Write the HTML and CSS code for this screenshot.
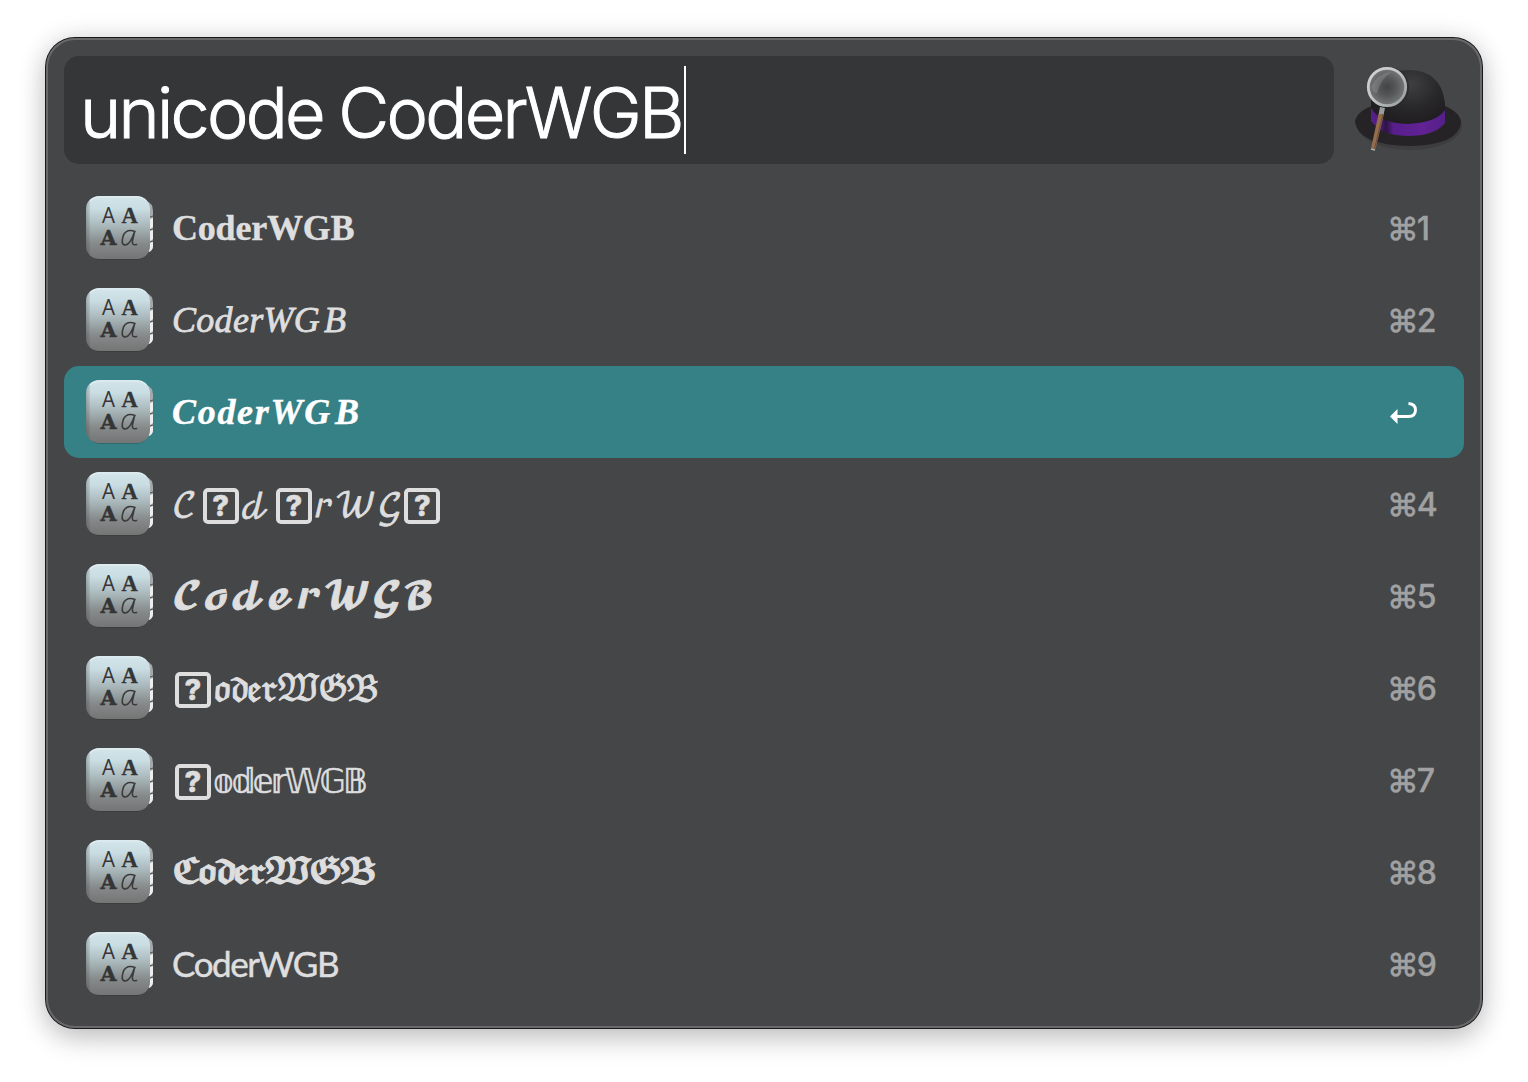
FILE: index.html
```html
<!DOCTYPE html>
<html lang="en">
<head>
<meta charset="utf-8">
<title>unicode CoderWGB</title>
<link rel="stylesheet" href="styles.css">
</head>
<body>
<svg class="defs" width="0" height="0" aria-hidden="true">
  <defs>
    <linearGradient id="tile" x1="0" y1="0" x2="0" y2="1">
      <stop offset="0" stop-color="#d3e5ea"/><stop offset=".2" stop-color="#c9dde3"/><stop offset=".48" stop-color="#a9b7ba"/><stop offset=".75" stop-color="#868a8a"/><stop offset="1" stop-color="#747575"/>
    </linearGradient>
    <linearGradient id="edge" x1="0" y1="0" x2="1" y2="0">
      <stop offset="0" stop-color="#333" stop-opacity=".3"/><stop offset=".06" stop-color="#444" stop-opacity=".12"/><stop offset=".07" stop-color="#444" stop-opacity="0"/>
    </linearGradient>
    <symbol id="font-book" viewBox="0 0 72 72">
      <rect x="5" y="6" width="62" height="62" rx="13" fill="#222" opacity=".25"/>
      <path d="M64 9q7 2 7 10v35q0 5-5 6z" fill="#a4a9ab"/>
      <path d="M68 27l3-1v9l-3 2zM68 39l3-1v9l-3 2zM67 51l4-1v4q0 4-4 6z" fill="#eee"/>
      <path d="M68 25l3-1M68 38l3-1M68 50l3-1" stroke="#555" stroke-width="1"/>
      <rect x="4" y="4" width="64" height="63" rx="13" fill="url(#tile)"/>
      <rect x="4" y="4" width="64" height="63" rx="13" fill="url(#edge)"/>
      <path d="M8 9q4-4 9-4h38q6 0 9 4" fill="none" stroke="#e8f3f6" stroke-width="1.2" opacity=".8"/>
      <g fill="#353536" text-anchor="middle">
        <text x="26.5" y="31" font-family="Open Sans" font-size="21" font-weight="400" textLength="13" lengthAdjust="spacingAndGlyphs">A</text>
        <text x="47.500" y="31" font-family="Liberation Serif" font-size="22.5" font-weight="700" stroke="#353536" stroke-width=".3">A</text>
        <text x="26.5" y="53" font-family="DejaVu Serif" font-size="20.500" font-weight="700" stroke="#353536" stroke-width=".5" textLength="16" lengthAdjust="spacingAndGlyphs">A</text>
      </g>
      <path d="M53 39.500Q45 36.500 41.500 43Q38 53 43.500 53Q48 53 52.500 40L50.500 48.500Q49.500 54 54.500 52.500" fill="none" stroke="#3b3b3c" stroke-width="1.6" stroke-linecap="round" stroke-linejoin="round"/>
    </symbol>
  </defs>
</svg>
<main class="panel">
  <header class="search">
    <div class="field"><span class="query">unicode CoderWGB</span><i class="caret"></i></div>
    <svg class="hat" viewBox="0 0 110 92">
      <defs>
        <radialGradient id="dome" cx=".55" cy=".22" r=".6"><stop offset="0" stop-color="#3f3e40"/><stop offset=".6" stop-color="#28272a"/><stop offset="1" stop-color="#201e21"/></radialGradient>
        <linearGradient id="band"><stop offset="0" stop-color="#57208b"/><stop offset=".12" stop-color="#4e1d7c"/><stop offset=".2" stop-color="#2c1541"/><stop offset=".3" stop-color="#571e8c"/><stop offset=".7" stop-color="#622293"/><stop offset="1" stop-color="#54208a"/></linearGradient>
        <radialGradient id="lens"><stop offset="0" stop-color="#424445"/><stop offset=".5" stop-color="#565859"/><stop offset="1" stop-color="#777a7a"/></radialGradient>
        <linearGradient id="ring" x1="0" y1="0" x2="1" y2="1"><stop offset="0" stop-color="#d4d6d6"/><stop offset=".5" stop-color="#c0c3c3"/><stop offset="1" stop-color="#959898"/></linearGradient>
      </defs>
      <ellipse cx="56" cy="61" rx="52" ry="24" fill="#333" opacity=".45"/>
      <path d="M1 57Q2 47 18 41L91 41Q107 48 107 58Q104 80 56 81Q4 80 1 57Z" fill="#252326"/>
      <path d="M17 59V34Q22 6 54 5Q87 5 91 38V57Q76 71 52 70Q26 68 17 59Z" fill="url(#dome)"/>
      <path d="M17 43Q26 58 53 59Q82 58 91 45V58Q81 71 53 71Q26 70 17 56Z" fill="url(#band)"/>
      <circle cx="35" cy="22" r="20" fill="#252525" opacity=".5"/>
      <circle cx="33" cy="22" r="18.700" fill="url(#lens)" stroke="url(#ring)" stroke-width="2.800"/>
      <path d="M18 21Q23 9 37 7Q27 14 23 28Q18 28 18 21Z" fill="#a7abab" opacity=".3"/>
      <path d="M26 42L31 43L29.500 50H24.500Z" fill="#999d9d"/>
      <path d="M24.500 49H30L21.500 84L17 83.500Z" fill="#956d4d"/>
      <path d="M29 49L20.500 84" stroke="#684d3a" stroke-width="1"/>
      <path d="M17 84L21 85" stroke="#b7b0a6" stroke-width="1.500"/>
    </svg>
  </header>
  <ul class="results">
    <li class="row"><svg class="icon"><use href="#font-book"/></svg><span class="label bold">CoderWGB</span><span class="key">⌘1</span></li>
    <li class="row"><svg class="icon"><use href="#font-book"/></svg><span class="label italic">CoderWG<span class="b">B</span></span><span class="key">⌘2</span></li>
    <li class="row selected"><svg class="icon"><use href="#font-book"/></svg><span class="label bold-italic">CoderWG<span class="b">B</span></span>
      <span class="key"><svg class="return" viewBox="0 0 28 24"><path d="M7 15.500H18.500Q25.500 15.500 25.500 9Q25.500 3 18.500 2.500" fill="none" stroke="#fff" stroke-width="2.900"/><path d="M0 15.500L7.500 8V23Z" fill="#fff"/></svg></span></li>
    <li class="row"><svg class="icon"><use href="#font-book"/></svg><span class="label math script">𝒞<b class="missing">?</b>𝒹<b class="missing">?</b>𝓇𝒲𝒢<b class="missing last">?</b></span><span class="key">⌘4</span></li>
    <li class="row"><svg class="icon"><use href="#font-book"/></svg><span class="label math bold-script">𝓒𝓸𝓭𝓮𝓻𝓦𝓖𝓑</span><span class="key">⌘5</span></li>
    <li class="row"><svg class="icon"><use href="#font-book"/></svg><span class="label math fraktur"><b class="missing">?</b>𝔬𝔡𝔢𝔯𝔚𝔊𝔅</span><span class="key">⌘6</span></li>
    <li class="row"><svg class="icon"><use href="#font-book"/></svg><span class="label math double"><b class="missing">?</b>𝕠𝕕𝕖𝕣𝕎𝔾𝔹</span><span class="key">⌘7</span></li>
    <li class="row"><svg class="icon"><use href="#font-book"/></svg><span class="label math bold-fraktur">𝕮𝖔𝖉𝖊𝖗𝖂𝕲𝕭</span><span class="key">⌘8</span></li>
    <li class="row"><svg class="icon"><use href="#font-book"/></svg><span class="label sans">CoderWGB</span><span class="key">⌘9</span></li>
  </ul>
</main>
</body>
</html>
```
FILE: styles.css
```css
* { box-sizing: border-box; }
body { margin: 0; height: 1082px; padding: 38px 46px; background: #fff; overflow: hidden; }
.defs { position: absolute; }
.panel {
  width: 1436px; height: 990px; padding: 18px 18px 0; border-radius: 29px;
  background: #454648;
  box-shadow: inset 0 0 0 2px #69696b, 0 0 0 1px #19191a, 0 10px 28px rgba(0,0,0,.22), 0 0 28px rgba(0,0,0,.1);
}
.search { display: flex; gap: 20px; height: 108px; }
.field { display: flex; align-items: center; width: 1270px; height: 108px; padding-left: 16px; border-radius: 15px; background: #353638; }
.query { font: 300 70px/86px Inter, sans-serif; color: #fff; white-space: nowrap; letter-spacing: -2.75px; word-spacing: -1.5px; margin: 6px 2px 0 0; -webkit-text-stroke: 1px #fff; }
.caret { width: 2px; height: 88px; background: #fff; }
.hat { width: 110px; height: 92px; margin-top: 9px; }
.results { list-style: none; margin: 18px 0 0; padding: 0; }
.row { display: flex; align-items: center; height: 92px; padding-left: 18px; border-radius: 15px; color: #dededf; }
.selected { background: #358186; color: #fff; }
.icon { width: 72px; height: 72px; flex: none; }
.label { margin-left: 18px; flex: 1; font-size: 36px; line-height: 46px; white-space: nowrap; }
.key { width: 77px; padding-top: 2px; font: 500 32px/40px Inter, sans-serif; letter-spacing: -2px; color: #a1a1a2; -webkit-text-stroke: .3px; }
.return { display: block; width: 28px; height: 24px; margin-left: 3px; }
.bold { font-family: "Liberation Serif", serif; font-weight: 700; letter-spacing: -.2px; -webkit-text-stroke: .4px; }
.italic { font-family: "Liberation Serif", serif; font-style: italic; letter-spacing: .3px; -webkit-text-stroke: .8px; }
.italic .b { margin-left: 4px; }
.bold-italic { font-family: "Liberation Serif", serif; font-style: italic; font-weight: 700; letter-spacing: 1.7px; -webkit-text-stroke: .4px; }
.bold-italic .b { margin-left: 3px; }
.math { font-family: "DejaVu Math TeX Gyre", "DejaVu Sans", serif; -webkit-text-stroke: .8px; }
.script { font-size: 34px; padding-top: 5px; }
.bold-script { font-size: 35px; letter-spacing: .5px; padding-top: 3px; }
.fraktur { font-size: 34px; letter-spacing: -3.600px; padding-top: 6px; -webkit-text-stroke: 1px; }
.double { font-family: "DejaVu Sans", sans-serif; font-size: 34px; letter-spacing: -2.700px; padding-top: 1px; -webkit-text-stroke: .5px; }
.bold-fraktur { font-size: 33px; letter-spacing: -4.700px; padding-top: 3px; -webkit-text-stroke: 1px; }
.missing { display: inline-block; width: 36px; height: 36px; margin: 0 2px 0 3px; border: 4px solid currentColor; border-radius: 5px; font: 800 29px/28px Inter, sans-serif; letter-spacing: 0; text-align: center; vertical-align: 1px; -webkit-text-stroke: .5px; }
.script .missing { margin: 0 1px 0 6px; }
.script .last { margin-left: 2px; }
.sans { font-family: Lato, sans-serif; font-size: 35px; letter-spacing: -1.400px; padding-bottom: 2px; -webkit-text-stroke: .5px; }
```
